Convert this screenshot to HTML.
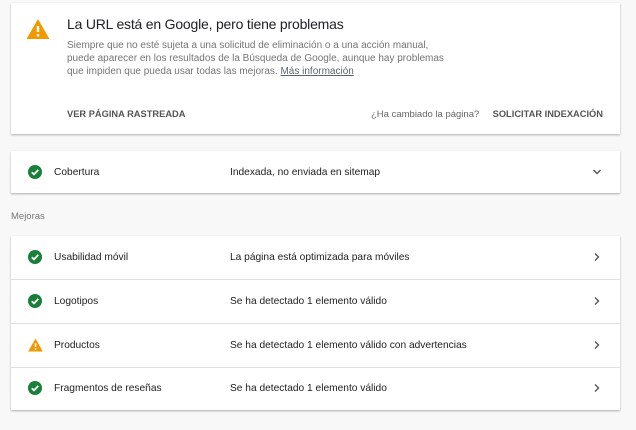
<!DOCTYPE html>
<html><head><meta charset="utf-8"><style>
body{margin:0;background:#f8f8f8;font-family:"Liberation Sans",sans-serif;width:636px;height:430px;overflow:hidden;position:relative;color:#212121}
.card{position:absolute;left:11px;width:609px;background:#fff;box-shadow:0 1px 2px rgba(0,0,0,.3)}
.t{position:absolute;white-space:nowrap}
.row{position:absolute;left:0;width:609px;height:43px;border-bottom:1px solid #e0e0e0;font-size:10.2px}
.row:last-child{border-bottom:none}
.row .ic{position:absolute;left:17px;top:14px}
.row .l{position:absolute;left:43px;top:16px}
.row .v{position:absolute;left:219px;top:16px}
.row .c{position:absolute;left:581px;top:16px}
</style></head><body>
<div class="card" style="top:3px;height:131px">
<svg style="position:absolute;left:15px;top:15px" width="24" height="22" viewBox="0 0 24 22"><path d="M12 1L23.5 21H.5z" fill="#f29900"/><rect x="10.8" y="8" width="2.4" height="6" fill="#fff"/><rect x="10.8" y="16" width="2.4" height="2.4" fill="#fff"/></svg>
<div class="t" style="left:56px;top:13px;font-size:14px;letter-spacing:-0.2px;color:#202124">La URL está en Google, pero tiene problemas</div>
<div class="t" style="left:56px;top:36px;font-size:10px;color:#757575;line-height:13.2px">Siempre que no esté sujeta a una solicitud de eliminación o a una acción manual,<br>puede aparecer en los resultados de la Búsqueda de Google, aunque hay problemas<br>que impiden que pueda usar todas las mejoras. <span style="color:#5f6368;text-decoration:underline">Más información</span></div>
<div class="t" style="left:56px;top:106px;font-size:9.3px;font-weight:bold;color:#555">VER PÁGINA RASTREADA</div>
<div class="t" style="left:360px;top:106px;font-size:9.5px;color:#666">¿Ha cambiado la página?</div>
<div class="t" style="right:17px;top:106px;font-size:9.3px;font-weight:bold;color:#555">SOLICITAR INDEXACIÓN</div>
</div>
<div class="card" style="top:151px;height:42px">
<div class="row" style="top:0"><svg class="ic" width="14" height="14" viewBox="0 0 14 14"><circle cx="7" cy="7" r="7" fill="#188038"/><path d="M3.8 7.2l2.2 2.2 4.3-4.5" stroke="#fff" stroke-width="1.8" fill="none"/></svg><span class="l">Cobertura</span><span class="v">Indexada, no enviada en sitemap</span><svg class="c" width="10" height="10" viewBox="0 0 10 10"><path d="M1.5 3l3.5 3.5L8.5 3" stroke="#555" stroke-width="1.4" fill="none"/></svg></div>
</div>
<div class="t" style="left:11px;top:211px;font-size:9.5px;color:#777">Mejoras</div>
<div class="card" style="top:236px;height:174px">
<div class="row" style="top:0"><svg class="ic" width="14" height="14" viewBox="0 0 14 14"><circle cx="7" cy="7" r="7" fill="#188038"/><path d="M3.8 7.2l2.2 2.2 4.3-4.5" stroke="#fff" stroke-width="1.8" fill="none"/></svg><span class="l">Usabilidad móvil</span><span class="v">La página está optimizada para móviles</span><svg class="c" width="10" height="10" viewBox="0 0 10 10"><path d="M3 1.5l3.5 3.5L3 8.5" stroke="#555" stroke-width="1.4" fill="none"/></svg></div>
<div class="row" style="top:44px"><svg class="ic" width="14" height="14" viewBox="0 0 14 14"><circle cx="7" cy="7" r="7" fill="#188038"/><path d="M3.8 7.2l2.2 2.2 4.3-4.5" stroke="#fff" stroke-width="1.8" fill="none"/></svg><span class="l">Logotipos</span><span class="v">Se ha detectado 1 elemento válido</span><svg class="c" width="10" height="10" viewBox="0 0 10 10"><path d="M3 1.5l3.5 3.5L3 8.5" stroke="#555" stroke-width="1.4" fill="none"/></svg></div>
<div class="row" style="top:88px"><svg class="ic" width="15" height="14" viewBox="0 0 15 14"><path d="M7.5 0.5L14.8 13.5H.2z" fill="#f29900"/><rect x="6.8" y="5" width="1.5" height="4" fill="#fff"/><rect x="6.8" y="10.3" width="1.5" height="1.5" fill="#fff"/></svg><span class="l">Productos</span><span class="v">Se ha detectado 1 elemento válido con advertencias</span><svg class="c" width="10" height="10" viewBox="0 0 10 10"><path d="M3 1.5l3.5 3.5L3 8.5" stroke="#555" stroke-width="1.4" fill="none"/></svg></div>
<div class="row" style="top:131px"><svg class="ic" width="14" height="14" viewBox="0 0 14 14"><circle cx="7" cy="7" r="7" fill="#188038"/><path d="M3.8 7.2l2.2 2.2 4.3-4.5" stroke="#fff" stroke-width="1.8" fill="none"/></svg><span class="l">Fragmentos de reseñas</span><span class="v">Se ha detectado 1 elemento válido</span><svg class="c" width="10" height="10" viewBox="0 0 10 10"><path d="M3 1.5l3.5 3.5L3 8.5" stroke="#555" stroke-width="1.4" fill="none"/></svg></div>
</div>
</body></html>
